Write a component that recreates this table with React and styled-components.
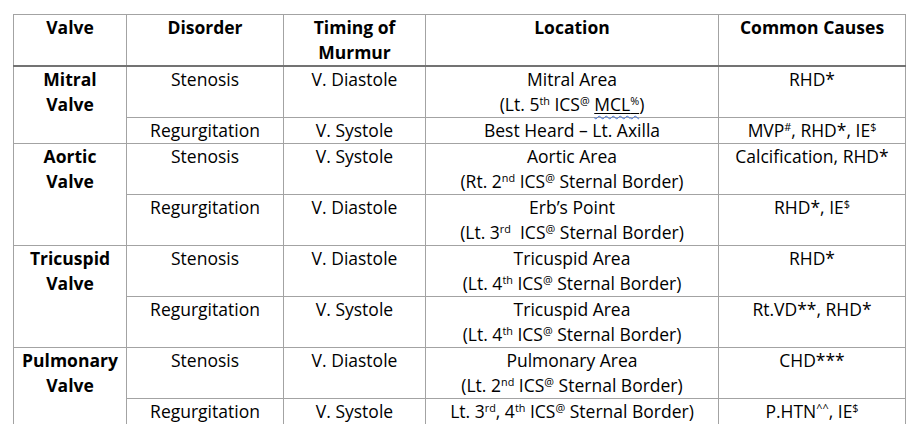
import React from "react";
import styled, { createGlobalStyle } from "styled-components";

const GlobalStyle = createGlobalStyle`
  html, body {
    margin: 0;
    background: #ffffff;
  }
  body {
    font-family: "Open Sans", "Liberation Sans", sans-serif;
    color: #000000;
  }
`;

const Page = styled.div`
  padding: 14px 0 0 13px;
`;

const Table = styled.table`
  border-collapse: collapse;
  table-layout: fixed;
  width: 892px;
  font-size: 17.5px;
  line-height: 25px;
`;

const Col = styled.col`
  width: ${(p) => p.w}px;
`;

const Th = styled.th`
  border: 1px solid #a3a3a3;
  border-bottom: 2px solid #737373;
  font-weight: 700;
  text-align: center;
  vertical-align: top;
  padding: 0 4px;
`;

const Td = styled.td`
  border: 1px solid #a3a3a3;
  text-align: center;
  vertical-align: top;
  padding: 0 4px;
  font-weight: ${(p) => (p.bold ? 700 : 400)};
`;

const Sup = styled.sup`
  font-size: 0.62em;
  line-height: 0;
  vertical-align: 0.55em;
`;

const Squiggle = styled.span`
  text-decoration: underline wavy #3f6fd8;
  text-decoration-thickness: 1px;
  text-underline-offset: 4px;
`;

const Under = styled.span`
  text-decoration: underline;
  text-decoration-thickness: 1px;
  text-underline-offset: 2px;
`;

const ICS = () => (
  <>
    ICS<Sup>@</Sup>
  </>
);

const rows = [
  {
    valve: ["Mitral", "Valve"],
    items: [
      {
        disorder: "Stenosis",
        timing: "V. Diastole",
        location: (
          <>
            Mitral Area
            <br />
            (Lt. 5<Sup>th</Sup> <ICS />{" "}
            <Under>
              <Squiggle>
                MCL<Sup>%</Sup>
              </Squiggle>
            </Under>
            )
          </>
        ),
        causes: "RHD*",
      },
      {
        disorder: "Regurgitation",
        timing: "V. Systole",
        location: "Best Heard – Lt. Axilla",
        causes: (
          <>
            MVP<Sup>#</Sup>, RHD*, IE<Sup>$</Sup>
          </>
        ),
      },
    ],
  },
  {
    valve: ["Aortic", "Valve"],
    items: [
      {
        disorder: "Stenosis",
        timing: "V. Systole",
        location: (
          <>
            Aortic Area
            <br />
            (Rt. 2<Sup>nd</Sup> <ICS /> Sternal Border)
          </>
        ),
        causes: "Calcification, RHD*",
      },
      {
        disorder: "Regurgitation",
        timing: "V. Diastole",
        location: (
          <>
            Erb’s Point
            <br />
            (Lt. 3<Sup>rd</Sup>&nbsp; <ICS /> Sternal Border)
          </>
        ),
        causes: (
          <>
            RHD*, IE<Sup>$</Sup>
          </>
        ),
      },
    ],
  },
  {
    valve: ["Tricuspid", "Valve"],
    items: [
      {
        disorder: "Stenosis",
        timing: "V. Diastole",
        location: (
          <>
            Tricuspid Area
            <br />
            (Lt. 4<Sup>th</Sup> <ICS /> Sternal Border)
          </>
        ),
        causes: "RHD*",
      },
      {
        disorder: "Regurgitation",
        timing: "V. Systole",
        location: (
          <>
            Tricuspid Area
            <br />
            (Lt. 4<Sup>th</Sup> <ICS /> Sternal Border)
          </>
        ),
        causes: "Rt.VD**, RHD*",
      },
    ],
  },
  {
    valve: ["Pulmonary", "Valve"],
    items: [
      {
        disorder: "Stenosis",
        timing: "V. Diastole",
        location: (
          <>
            Pulmonary Area
            <br />
            (Lt. 2<Sup>nd</Sup> <ICS /> Sternal Border)
          </>
        ),
        causes: "CHD***",
      },
      {
        disorder: "Regurgitation",
        timing: "V. Systole",
        location: (
          <>
            Lt. 3<Sup>rd</Sup>, 4<Sup>th</Sup> <ICS /> Sternal Border)
          </>
        ),
        causes: (
          <>
            P.HTN<Sup>^^</Sup>, IE<Sup>$</Sup>
          </>
        ),
      },
    ],
  },
];

export default function App() {
  return (
    <Page>
      <GlobalStyle />
      <Table>
        <colgroup>
          <Col w={113} />
          <Col w={157} />
          <Col w={142} />
          <Col w={293} />
          <Col w={187} />
        </colgroup>
        <thead>
          <tr>
            <Th>Valve</Th>
            <Th>Disorder</Th>
            <Th>
              Timing of
              <br />
              Murmur
            </Th>
            <Th>Location</Th>
            <Th>Common Causes</Th>
          </tr>
        </thead>
        <tbody>
          {rows.map((r) =>
            r.items.map((it, i) => (
              <tr key={r.valve[0] + i}>
                {i === 0 && (
                  <Td bold rowSpan={r.items.length}>
                    {r.valve[0]}
                    <br />
                    {r.valve[1]}
                  </Td>
                )}
                <Td>{it.disorder}</Td>
                <Td>{it.timing}</Td>
                <Td>{it.location}</Td>
                <Td>{it.causes}</Td>
              </tr>
            ))
          )}
        </tbody>
      </Table>
    </Page>
  );
}
